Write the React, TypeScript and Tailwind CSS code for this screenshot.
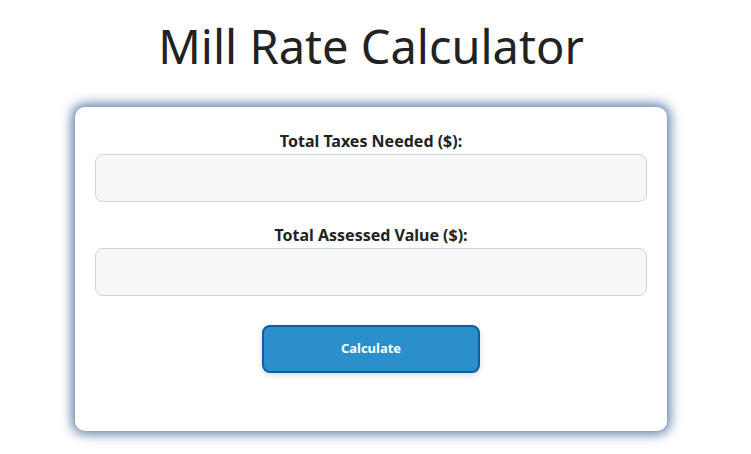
export default function App() {
  return (
    <div className="min-h-[454px] w-[742px] bg-white font-['Noto_Sans',sans-serif] text-[#222]">
      <h1 className="pt-[15px] text-center text-[47px] font-normal leading-[62px] text-[#222]">
        Mill Rate Calculator
      </h1>
      <div className="mx-auto mt-[30px] w-[592px] rounded-[10px] bg-white px-5 pb-[58px] pt-6 shadow-[0_0_12px_3px_#5a7ca3]">
        <div className="flex flex-col">
          <label className="text-center text-[16px] font-bold leading-5 text-[#222]">
            Total Taxes Needed ($):
          </label>
          <input
            type="text"
            className="mt-[3px] h-12 w-full rounded-lg border border-[#d4d4d4] bg-[#f6f7f9] px-3 outline-none"
          />
          <label className="mt-[23px] text-center text-[16px] font-bold leading-5 text-[#222]">
            Total Assessed Value ($):
          </label>
          <input
            type="text"
            className="mt-[3px] h-12 w-full rounded-lg border border-[#d4d4d4] bg-[#f6f7f9] px-3 outline-none"
          />
          <button
            type="button"
            className="mx-auto mt-[29px] h-12 w-[218px] rounded-lg border-2 border-[#0d5ea8] bg-[#2a8fcb] text-[13px] font-bold text-white shadow-[0_2px_6px_rgba(0,0,0,0.15)]"
          >
            Calculate
          </button>
        </div>
      </div>
    </div>
  )
}
